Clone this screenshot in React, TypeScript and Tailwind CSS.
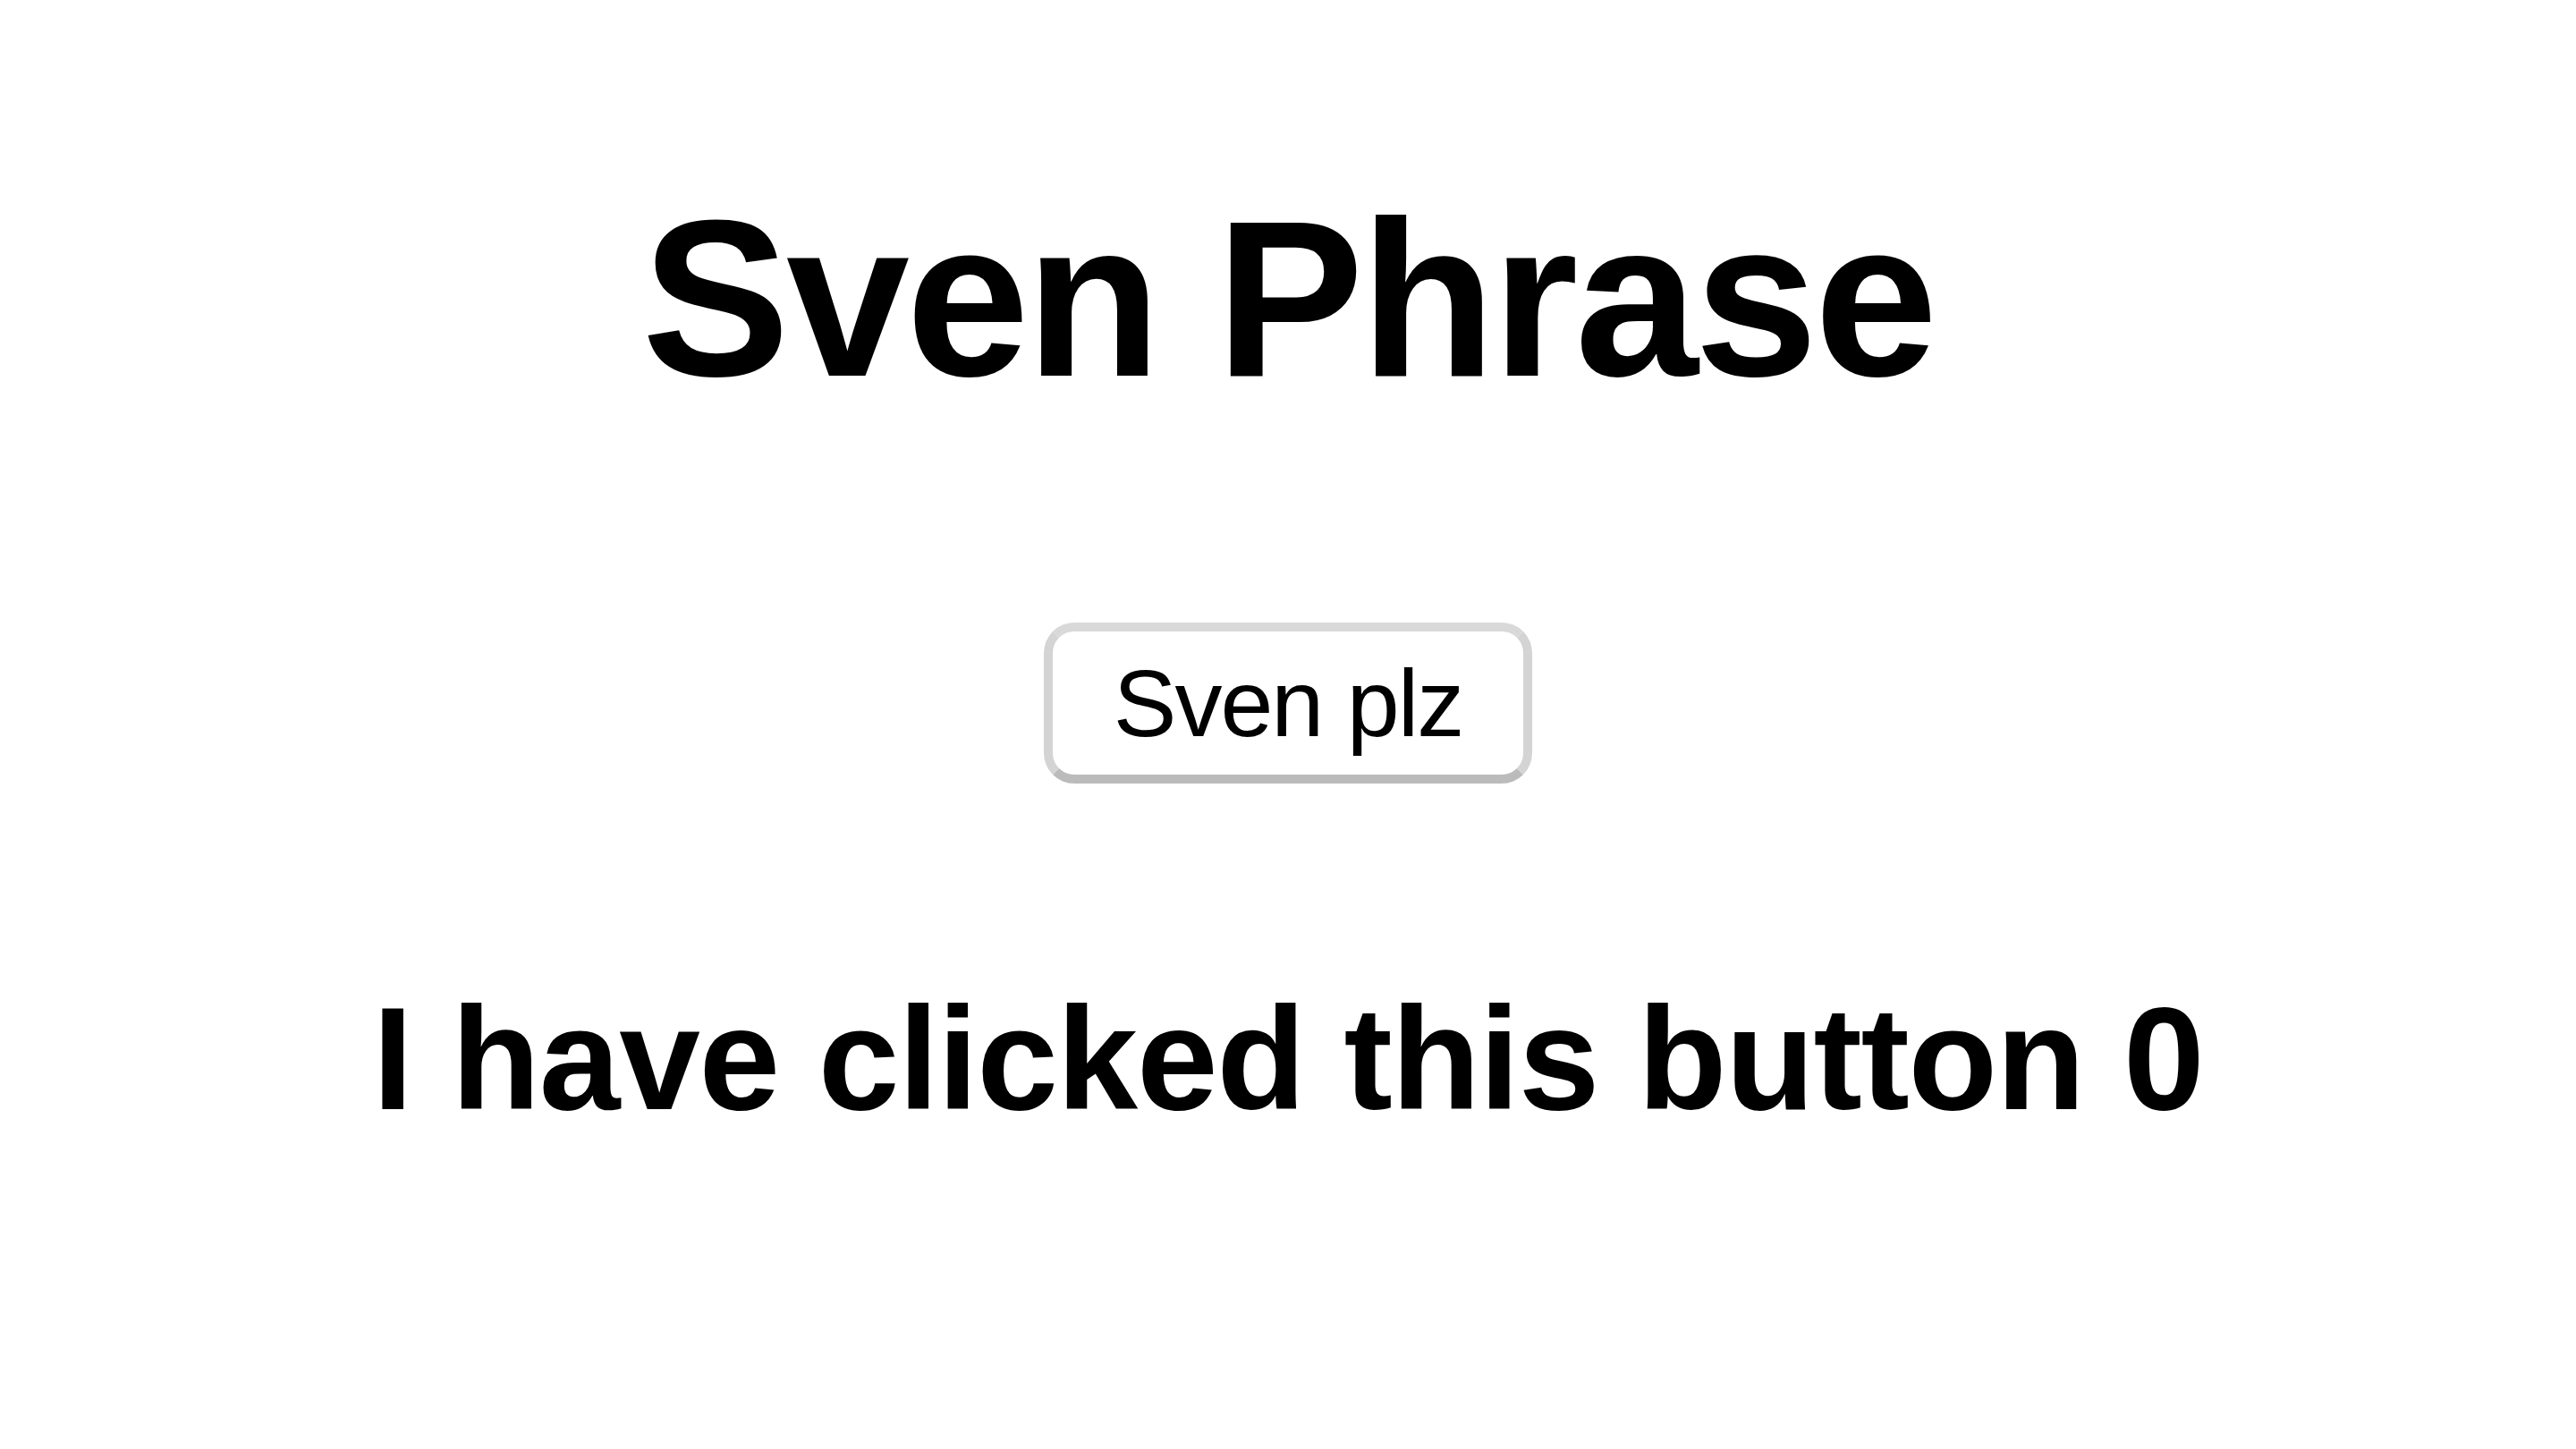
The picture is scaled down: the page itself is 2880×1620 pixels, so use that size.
import { useState } from 'react';

export default function App() {
  const [count, setCount] = useState(0);

  return (
    <div className="min-h-screen bg-white flex flex-col items-center text-black font-['Liberation_Sans',Arial,sans-serif]">
      {/* Título */}
      <h1 className="pt-[210px] text-[248px] leading-none font-bold tracking-[-4px]">Sven Phrase</h1>

      {/* Botão */}
      <button
        onClick={() => setCount(count + 1)}
        className="mt-[238px] w-[546px] h-[180px] rounded-[34px] border-[10px] border-[#d4d4d4] border-t-[#d9d9d9] border-b-[#bbbbbb] bg-white text-[106px] leading-none tracking-[-2px]"
      >
        Sven plz
      </button>

      <h2 className="mt-[226px] text-[163px] leading-none font-bold tracking-[-1.3px]">
        I have clicked this button {count}
      </h2>
    </div>
  );
}
